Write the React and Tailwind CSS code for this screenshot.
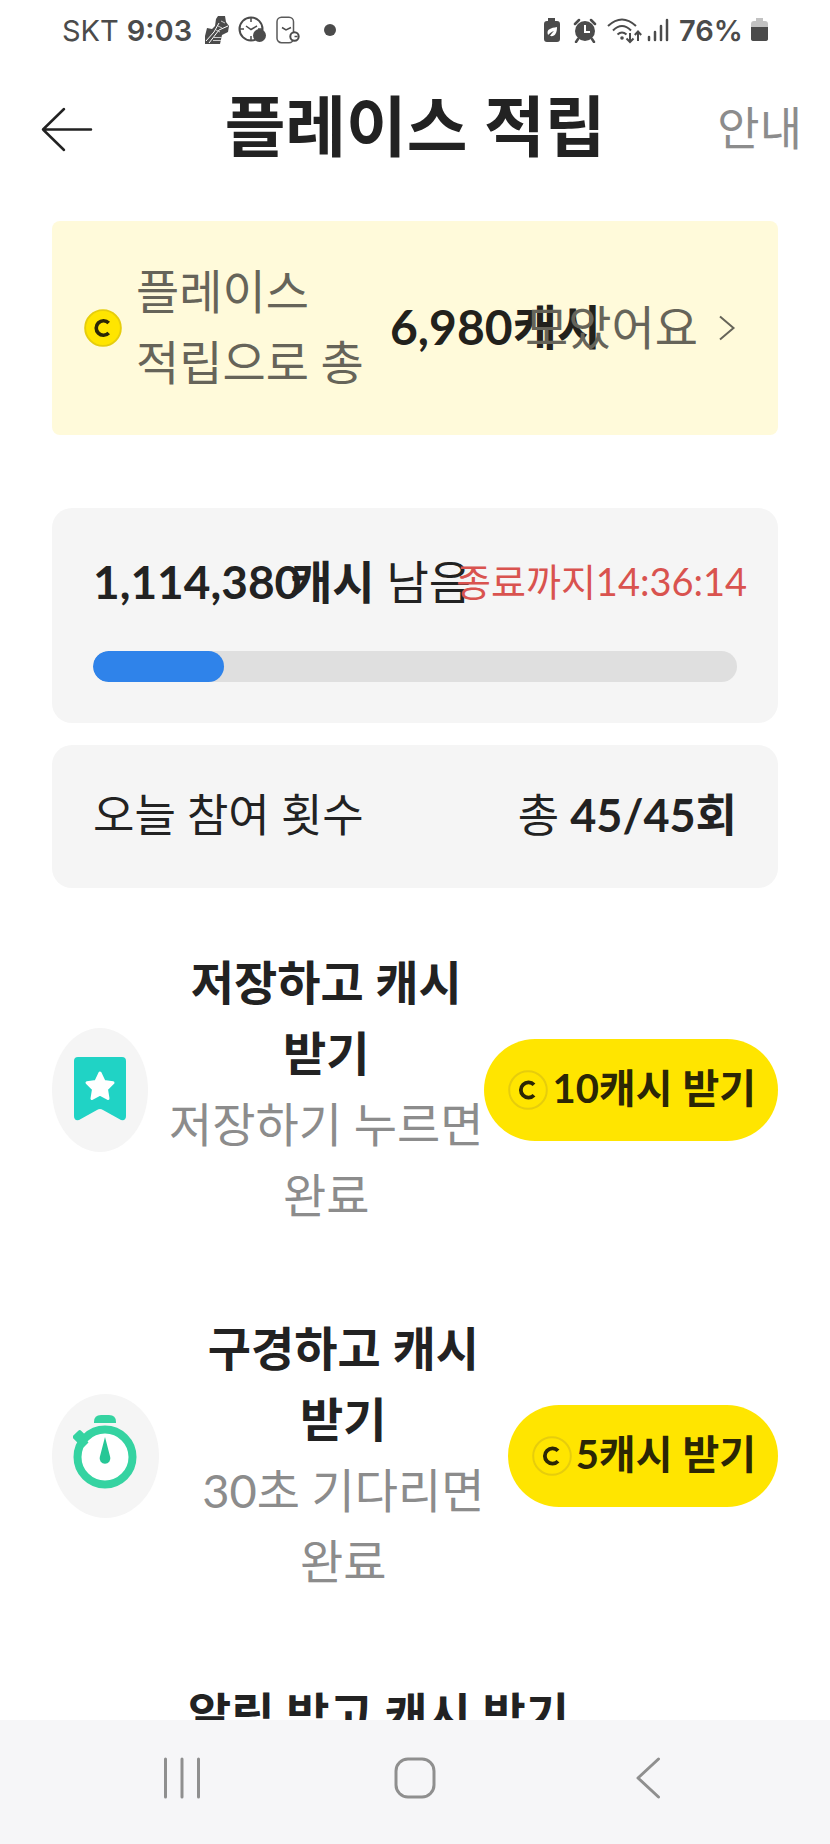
const CASH_USED_PERCENT = 20.4;

const TASKS = [
  {
    id: "save",
    title: "저장하고 캐시 받기",
    description: "저장하기 누르면 완료",
    reward: 10,
    icon: <BookmarkIcon />,
    iconWidth: "w-24"
  },
  {
    id: "visit",
    title: "구경하고 캐시 받기",
    description: (
      <>
        <Num>30</Num>초 기다리면 완료
      </>
    ),
    reward: 5,
    icon: <StopwatchIcon />,
    iconWidth: "w-[107px]"
  }
];

function Num({ children }) {
  return <span className="font-['Lato',sans-serif] leading-none">{children}</span>;
}

function BookmarkIcon() {
  return (
    <svg aria-hidden="true" className="h-[68px] w-[54px]" viewBox="0 0 54 68">
      <path
        d="M5 1h44q4 0 4 4v55q0 5-5 4L30 54q-3-2-6 0L6 64q-5 1-5-4V5q0-4 4-4z"
        fill="#20d3c5"
      />
      <path
        d="M27 17l4 8.500 9 1.300-6.500 6.500 1.500 9.200-8-4.300-8 4.300 1.500-9.200L14 26.800l9-1.300z"
        fill="#fff"
        stroke="#fff"
        strokeLinejoin="round"
        strokeWidth="3"
      />
    </svg>
  );
}

function StopwatchIcon() {
  return (
    <svg aria-hidden="true" className="h-[84px] w-[66px]" viewBox="0 0 66 84">
      <circle cx="32" cy="43" fill="#fff" r="27.500" stroke="#35d3a1" strokeWidth="8" />
      <path d="M28 1h8q7 0 7 7v1H21V8q0-7 7-7z" fill="#35d3a1" />
      <rect fill="#35d3a1" height="9" rx="2" transform="rotate(-45 6 23)" width="11" x="1" y="18" />
      <path d="M7 25l6 6" stroke="#35d3a1" strokeWidth="7" />
      <path d="M32 23l5.200 20a5.400 5.400 0 1 1-10.400 0z" fill="#26c796" />
    </svg>
  );
}

function CoinIcon({ className }) {
  return (
    <svg aria-hidden="true" className={className} viewBox="0 0 40 40">
      <circle cx="20" cy="20" fill="#ffe500" r="18.800" stroke="#e6cd0c" strokeWidth="2" />
      <path d="M26 14.800a7.600 7.600 0 1 0 0 10.400" fill="none" stroke="#2b2605" strokeWidth="3.800" />
    </svg>
  );
}

function StatusBar() {
  return (
    <div className="flex h-[60px] shrink-0 items-center justify-between px-[62px] font-['Inter',sans-serif] text-[29px] leading-none text-[#4b4b4b]">
      <div className="flex items-center">
        <span>SKT</span>
        <span className="ml-2 font-semibold">9:03</span>
        <svg aria-hidden="true" className="ml-3 h-[30px] w-[26px]" viewBox="0 0 26 30">
          <path d="M14 1l7 0 1 6 3 4-1 6-6 3-2 9H1v-8l2-8 5 1 3-3 1-7z" fill="#4b4b4b" />
          <path d="M2 26l8-9 5-9M5 28l10-13 9-4" fill="none" stroke="#fff" strokeWidth="1" />
          <path d="M10 22.500h8M9 25.500h8" stroke="#ccc" strokeWidth="1" />
          <path d="M14 11l4 2M12 15l4 2M17 6l4 2" stroke="#ccc" strokeWidth="1" />
        </svg>
        <svg aria-hidden="true" className="ml-2 h-[28px] w-[28px]" viewBox="0 0 28 28">
          <circle cx="13" cy="13" fill="none" r="11.500" stroke="#4b4b4b" strokeWidth="2" />
          <path
            d="M13 2v4M13 20v4M2 13h4M20 13h4M8 10l5 3.500 6-3.500"
            fill="none"
            stroke="#4b4b4b"
            strokeWidth="1.500"
          />
          <circle cx="21.500" cy="19.500" fill="#4b4b4b" r="6.500" />
        </svg>
        <svg aria-hidden="true" className="ml-2.5 h-[28px] w-[24px]" viewBox="0 0 24 28">
          <rect fill="none" height="25.500" rx="4.500" stroke="#5a5a5a" strokeWidth="1.500" width="16.500" x="1" y="1.200" />
          <path d="M6 11.500l4 2.500 5-2.500" fill="none" stroke="#4b4b4b" strokeWidth="1.500" />
          <circle cx="18.500" cy="20.500" fill="#fff" r="4.200" stroke="#4b4b4b" strokeWidth="2" />
          <path d="M18.500 20.500h3" stroke="#4b4b4b" strokeWidth="1.500" />
        </svg>
        <span className="ml-6 h-3 w-3 rounded-full bg-[#4b4b4b]" />
      </div>
      <div className="flex items-center">
        <svg aria-hidden="true" className="h-[25px] w-[18px]" viewBox="0 0 18 25">
          <path d="M5 0h7v3h2q3 0 3 3v15q0 3-3 3H4q-3 0-3-3V6q0-3 3-3h1z" fill="#4b4b4b" />
          <path d="M5 17c-2-6 3-7 9-8 0 6-2 10-7 9 2-3 3-4 4-5-3 1-4 2-6 4z" fill="#fff" />
        </svg>
        <svg aria-hidden="true" className="ml-3 h-[25px] w-[24px]" viewBox="0 0 24 25">
          <circle cx="12" cy="13" fill="#4b4b4b" r="10" />
          <path d="M2 6l4-4M22 6l-4-4M5 21l-2 3M19 21l2 3" stroke="#4b4b4b" strokeLinecap="round" strokeWidth="2.500" />
          <path d="M12 7v7h5" fill="none" stroke="#fff" strokeWidth="2" />
        </svg>
        <svg aria-hidden="true" className="ml-2.5 h-[27px] w-[36px]" viewBox="0 0 36 27">
          <g fill="none" stroke="#4b4b4b" strokeWidth="2">
            <path d="M1 9q14-13 28 0M6 13.500q9-9 18 0M10.500 17.500q4.500-4 9 0" />
            <path d="M23 16v9M19.500 21.500l3.500 3.500 3.500-3.500M31 24v-9M27.800 18l3.200-3.500 3.200 3.500" />
          </g>
          <circle cx="15" cy="21" fill="#4b4b4b" r="1.800" />
        </svg>
        <svg aria-hidden="true" className="ml-1 h-[24px] w-[22px]" viewBox="0 0 22 24">
          <path
            d="M2 19v3M8 14v8M14 8v14M20 2v20"
            stroke="#4b4b4b"
            strokeLinecap="round"
            strokeWidth="2.500"
          />
        </svg>
        <span className="ml-2.5 font-semibold">76%</span>
        <svg aria-hidden="true" className="ml-2 h-[24px] w-[17px]" viewBox="0 0 17 24">
          <path d="M5 0h7v3h2q3 0 3 3v3H0V6q0-3 3-3h2z" fill="#c2c2c2" />
          <path d="M0 9h17v12q0 2-3 2H3q-3 0-3-2z" fill="#4b4b4b" />
        </svg>
      </div>
    </div>
  );
}

function Header() {
  return (
    <header className="grid shrink-0 grid-cols-[1fr_auto_1fr] items-center px-7">
      <button aria-label="뒤로" className="justify-self-start px-3" type="button">
        <svg aria-hidden="true" className="h-[46px] w-[54px]" viewBox="0 0 54 46">
          <path
            d="M51 23.500H3M24 3L3 23.500 24 44"
            fill="none"
            stroke="#222"
            strokeLinecap="round"
            strokeLinejoin="round"
            strokeWidth="2.500"
          />
        </svg>
      </button>
      <h1 className="text-[66px] leading-[138px] font-bold">플레이스 적립</h1>
      <a className="justify-self-end text-[46px] text-[#8c8c8c]" href="#guide">
        안내
      </a>
    </header>
  );
}

function TotalBanner() {
  return (
    <a
      className="mt-[23px] flex items-center rounded-lg bg-[#fffada] py-9 pr-[42px] pl-8 text-[47px] leading-[71px] text-[#666459]"
      href="#history"
    >
      <CoinIcon className="h-[38px] w-[38px] shrink-0" />
      <span className="ml-3.5 flex-1 break-keep">플레이스 적립으로 총</span>
      <strong className="w-[135px] text-[48px] font-bold whitespace-nowrap text-[#22211c]">
        <Num>6,980</Num>캐시
      </strong>
      <span className="whitespace-nowrap">모았어요</span>
      <svg aria-hidden="true" className="ml-5 h-[26px] w-[18px] shrink-0" viewBox="0 0 18 26">
        <path d="M2 1.500L15.500 13 2 24.500" fill="none" stroke="#666459" strokeWidth="2" />
      </svg>
    </a>
  );
}

function RemainingCard() {
  return (
    <section className="mt-[73px] rounded-[20px] bg-[#f5f5f5] px-[41px] pt-[38px] pb-[41px]">
      <div className="flex items-center font-['Lato','Noto_Sans_CJK_KR',sans-serif] text-[46px] leading-[71px] whitespace-nowrap">
        <strong className="w-[197px] shrink-0 font-bold">1,114,380</strong>
        <span className="w-[166px] shrink-0">
          <strong className="font-bold">캐시</strong> 남음
        </span>
        <span className="text-[38px] text-[#d9534f]">종료까지14:36:14</span>
      </div>
      <div
        aria-label="남은 캐시"
        aria-valuemax={100}
        aria-valuemin={0}
        aria-valuenow={CASH_USED_PERCENT}
        className="mt-[34px] h-[31px] overflow-hidden rounded-full bg-[#dfdfdf]"
        role="progressbar"
      >
        <div className="h-full rounded-full bg-[#2f83ea]" style={{ width: `${CASH_USED_PERCENT}%` }} />
      </div>
    </section>
  );
}

function TodayCard() {
  return (
    <section className="mt-[22px] flex items-center justify-between rounded-[20px] bg-[#f5f5f5] px-[41px] py-9 text-[45px] leading-[71px]">
      <span>오늘 참여 횟수</span>
      <span>
        총{" "}
        <strong className="font-bold">
          <Num>45/45</Num>회
        </strong>
      </span>
    </section>
  );
}

function TaskRow({ task }) {
  return (
    <li className="flex items-center">
      <span
        className={`flex h-[124px] shrink-0 items-center justify-center rounded-[50%] bg-[#f5f5f5] ${task.iconWidth}`}
      >
        {task.icon}
      </span>
      <div className="ml-5 flex-1 text-center text-[47px] leading-[71px] break-keep">
        <h2 className="font-bold">{task.title}</h2>
        <p className="text-[#8c8c8c]">{task.description}</p>
      </div>
      <button
        className="flex h-[102px] shrink-0 items-center gap-1 rounded-full bg-[#ffe500] pr-[22px] pl-6 text-[40px] font-bold text-[#2b2605]"
        type="button"
      >
        <CoinIcon className="h-10 w-10" />
        <span>
          <Num>{task.reward}</Num>캐시 받기
        </span>
      </button>
    </li>
  );
}

function SystemNav() {
  return (
    <nav className="grid h-[124px] shrink-0 grid-cols-3 items-center bg-[#f6f6f8] px-[66px] pb-2">
      <button aria-label="최근 앱" className="flex justify-center" type="button">
        <svg aria-hidden="true" className="h-[42px] w-[38px]" viewBox="0 0 38 42">
          <path d="M2.500 2v38M19 2v38M35.500 2v38" stroke="#8f8f8f" strokeLinecap="round" strokeWidth="3" />
        </svg>
      </button>
      <button aria-label="홈" className="flex justify-center" type="button">
        <svg aria-hidden="true" className="h-[42px] w-[42px]" viewBox="0 0 42 42">
          <rect fill="none" height="38" rx="12" stroke="#8f8f8f" strokeWidth="3" width="38" x="2" y="2" />
        </svg>
      </button>
      <button aria-label="뒤로 가기" className="flex justify-center" type="button">
        <svg aria-hidden="true" className="h-[42px] w-[26px]" viewBox="0 0 26 42">
          <path
            d="M23.500 2L3 21l20.500 19"
            fill="none"
            stroke="#8f8f8f"
            strokeLinecap="round"
            strokeLinejoin="round"
            strokeWidth="3"
          />
        </svg>
      </button>
    </nav>
  );
}

export default function App() {
  return (
    <div className="flex h-screen flex-col bg-white font-['Roboto','Noto_Sans_CJK_KR',sans-serif] text-[#222]">
      <StatusBar />
      <Header />
      <main className="min-h-0 flex-1 overflow-hidden px-[52px]">
        <TotalBanner />
        <RemainingCard />
        <TodayCard />
        <ul className="mt-[60px] flex flex-col gap-[82px]">
          {TASKS.map((task) => (
            <TaskRow key={task.id} task={task} />
          ))}
          <li className="pr-[210px] pl-[136px] text-center text-[47px] leading-[71px] whitespace-nowrap">
            <h2 className="font-bold">알림 받고 캐시 받기</h2>
          </li>
        </ul>
      </main>
      <SystemNav />
    </div>
  );
}
